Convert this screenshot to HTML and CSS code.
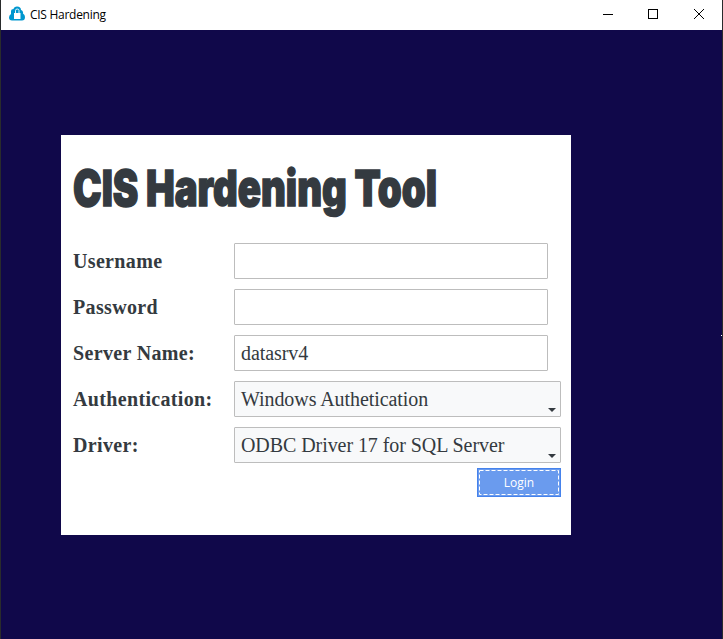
FILE: index.html
```html
<!DOCTYPE html>
<html lang="en">
<head>
<meta charset="utf-8">
<title>CIS Hardening</title>
<link rel="stylesheet" href="styles.css">
</head>
<body>
<div class="window">
  <header class="titlebar">
    <svg class="logo" width="16" height="16" viewBox="0 0 16 16"><path fill="#0097cf" d="M2 5Q2 3 4.500 3Q5 .5 8 .5Q12 .5 12 4Q14.500 5 14 7.500Q16 8.500 16 11Q16 14.500 13 14.500H3Q0 14.500 0 11.500Q0 9 2 8Z"/><path fill="#fff" d="M5 7H11.500V13H5Z"/><path fill="none" stroke="#fff" stroke-width=".9" d="M6.5 7V4.500Q6.500 3 8.200 3Q10 3 10 4.500V7"/></svg>
    <span class="caption">CIS Hardening</span>
    <svg class="controls" width="137" height="29" viewBox="0 0 137 29" fill="none" stroke="#000" shape-rendering="crispEdges"><path d="M18 14.500H28M63.500 9.500H72.500V18.500H63.500Z"/><path shape-rendering="auto" d="M109 9L119 19M119 9L109 19"/></svg>
  </header>
  <main class="client">
    <form class="panel">
      <svg class="heading" width="380" height="60" viewBox="0 0 380 60" role="heading">
        <text x="0" y="46" textLength="364" lengthAdjust="spacingAndGlyphs">CIS Hardening Tool</text>
      </svg>
      <div class="fields">
        <span class="label">Username</span><div class="box"></div>
        <span class="label">Password</span><div class="box"></div>
        <span class="label">Server Name:</span><div class="box">datasrv4</div>
        <span class="label">Authentication:</span><div class="box select">Windows Authetication<svg class="arrow" width="8" height="4"><path d="M0 0H8L4 4Z"/></svg></div>
        <span class="label">Driver:</span><div class="box select">ODBC Driver 17 for SQL Server<svg class="arrow" width="8" height="4"><path d="M0 0H8L4 4Z"/></svg></div>
      </div>
      <button class="login" type="button"><svg class="focus" width="80" height="25"><rect x=".5" y=".5" width="79" height="24"/></svg>Login</button>
    </form>
    <i class="speck"></i>
  </main>
</div>
</body>
</html>
```
FILE: styles.css
```css
* { box-sizing: border-box; }
body { margin: 0; background: #292b2c; }
.window { width: 723px; height: 639px; padding: 0 1px; overflow: hidden; }
.titlebar { height: 30px; background: #fff; display: flex; align-items: flex-start; padding-left: 8px; }
.logo { margin-top: 6px; flex: none; }
.caption { margin: 6px 0 0 5px; font: 12px/17px "Open Sans", sans-serif; letter-spacing: -.28px; color: #000; flex: 1; }
.client { position: relative; height: 609px; background: #10084a; padding: 105px 0 0 60px; }
.speck { position: absolute; right: 0; top: 305px; width: 1px; height: 1px; background: #fff; }
.panel { width: 510px; height: 400px; background: #fff; padding: 25px 10px 0 12px; display: flex; flex-direction: column; }
.heading { flex: none; overflow: visible; font: 900 50px Inter, sans-serif; fill: #343a40; stroke: #343a40; stroke-width: 1.5px; }
.fields { margin-top: 23px; display: grid; grid-template-columns: 161px 327px; grid-auto-rows: 36px; row-gap: 10px; align-items: center; font: 20px/34px "Liberation Serif", serif; color: #343a40; }
.label { font-weight: bold; font-size: 20px; letter-spacing: .34px; }
.box { position: relative; width: 314px; height: 36px; border: 1px solid #bdbdbd; border-radius: 1px; padding-left: 6px; white-space: nowrap; letter-spacing: -.07px; }
.select { width: 327px; background: #f8f9fa; }
.arrow { position: absolute; right: 4px; bottom: 4px; fill: #343a40; }
.login { position: relative; align-self: flex-end; margin-top: 5px; width: 84px; height: 29px; padding: 0; border: 1px solid #4582ec; background: #6a9bee; color: #fff; font: 12px/27px "Open Sans", sans-serif; }
.focus { position: absolute; left: 1px; top: 1px; fill: none; stroke: #fff; stroke-dasharray: 4 2; }
```
